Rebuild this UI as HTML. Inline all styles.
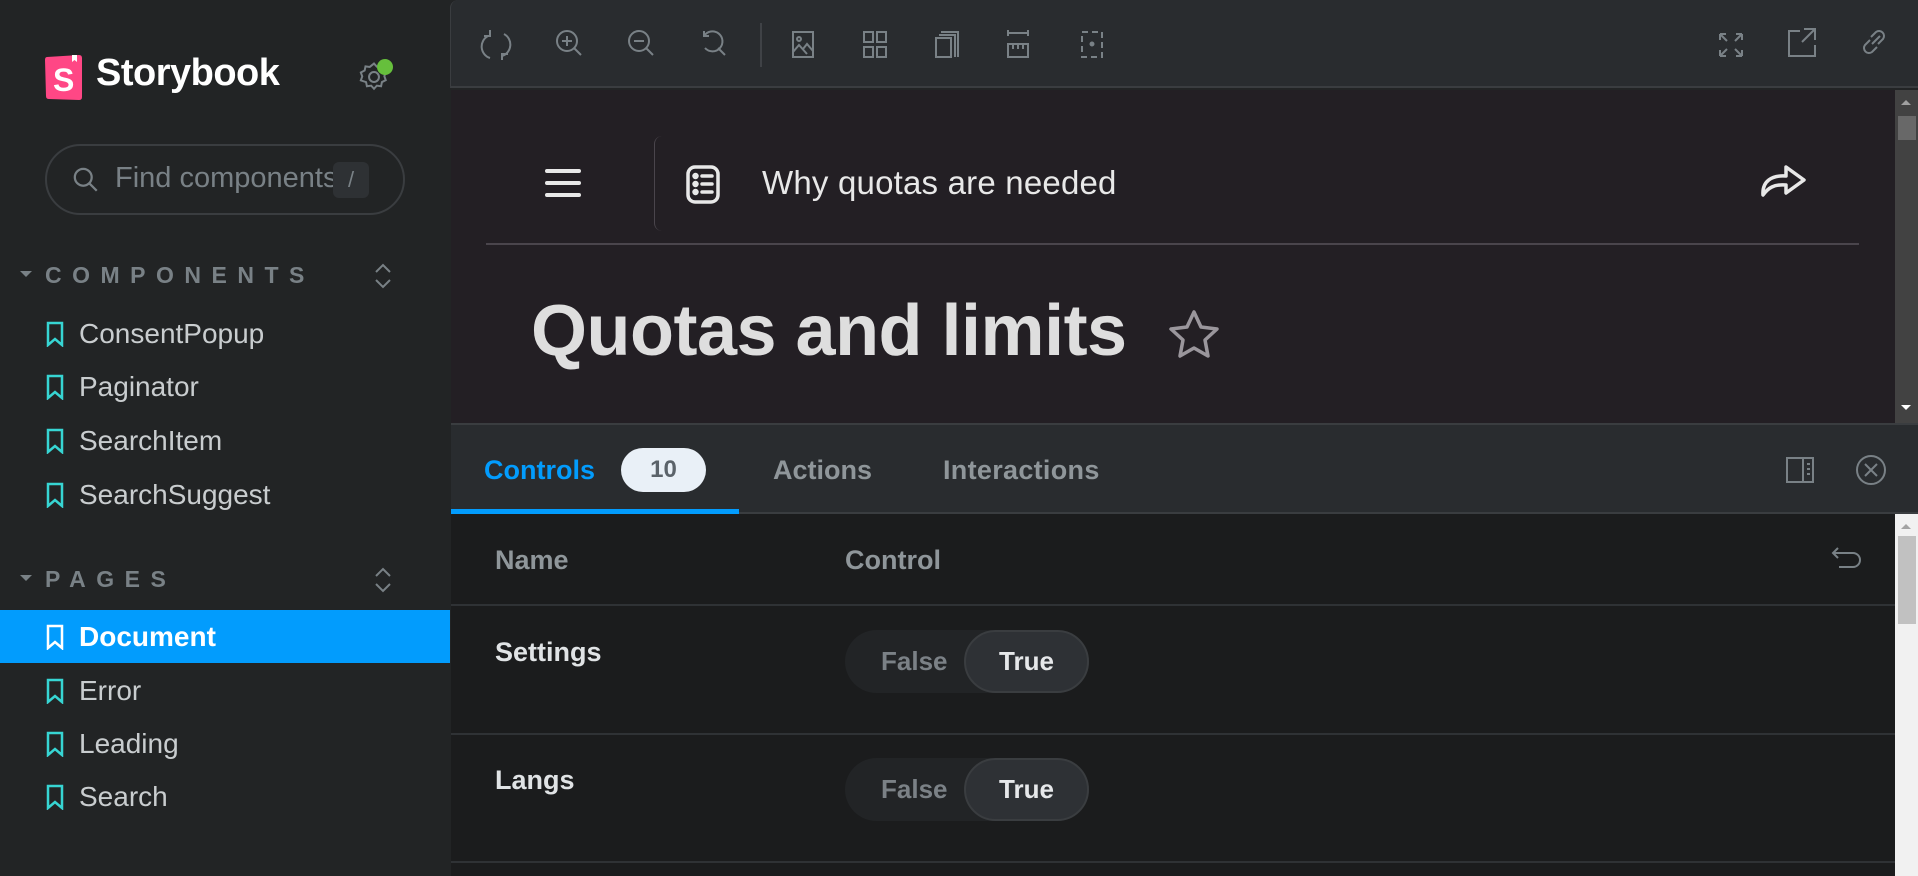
<!DOCTYPE html>
<html><head><meta charset="utf-8"><style>
*{margin:0;padding:0;box-sizing:border-box}
body{width:1918px;height:876px;overflow:hidden;background:#222425;font-family:"Liberation Sans",sans-serif;position:relative}
.a{position:absolute}
.side{left:0;top:0;width:450px;height:876px;background:#222425}
.item{position:absolute;left:0;width:450px;height:53px;color:#c9cdcf;font-size:28px;line-height:53px;padding-left:79px}
.item svg{position:absolute;left:46px;top:14px}
.hdr{position:absolute;left:45px;color:#798186;font-size:23px;font-weight:bold;letter-spacing:10.5px}
</style></head><body>
<div class="a side">
  <svg class="a" style="left:45px;top:53px" width="38" height="47" viewBox="0 0 38 47"><path d="M2 4 L34 2 Q37 2 37 5 L37 44 Q37 47 34 47 L4 46 Q1 46 1 43 L0 7 Q0 4 2 4Z" fill="#ff4785"/><path d="M27 2 L27 9 L29.5 7 L32 9 L32 2Z" fill="#fff"/><text x="8" y="38" font-family="Liberation Sans" font-weight="bold" font-size="32" fill="#fff">S</text></svg>
  <div class="a" style="left:96px;top:52px;color:#fff;font-size:38px;font-weight:bold;letter-spacing:-0.5px">Storybook</div>
  <svg class="a" style="left:356px;top:60px" width="36" height="34" viewBox="0 0 24 24" fill="none" stroke="#798186" stroke-width="1.4"><circle cx="12" cy="12" r="3.5"/><path d="M12 2.5l2 2.2 3-.4.6 2.9 2.7 1.4-1 2.8 1 2.8-2.7 1.4-.6 2.9-3-.4-2 2.2-2-2.2-3 .4-.6-2.9L2.7 14.4l1-2.8-1-2.8 2.7-1.4.6-2.9 3 .4z"/></svg>
  <div class="a" style="left:377px;top:59px;width:16px;height:16px;border-radius:50%;background:#66bf3c"></div>
  <div class="a" style="left:45px;top:144px;width:360px;height:71px;border:2px solid #3a3d40;border-radius:36px"></div>
  <svg class="a" style="left:72px;top:166px" width="27" height="27" viewBox="0 0 24 24" fill="none" stroke="#798186" stroke-width="2"><circle cx="10" cy="10" r="7.5"/><path d="M15.5 15.5L22 22"/></svg>
  <div class="a" style="left:115px;top:162px;color:#798186;font-size:29px;width:218px;overflow:hidden;white-space:nowrap">Find components</div>
  <div class="a" style="left:333px;top:162px;width:36px;height:36px;border-radius:6px;background:#2e3134;color:#798186;font-size:22px;text-align:center;line-height:36px">/</div>
  <svg class="a" style="left:20px;top:271px" width="12" height="8"><path d="M0 0h12L6 6z" fill="#798186"/></svg>
  <div class="hdr" style="top:262px">COMPONENTS</div>
  <svg class="a" style="left:373px;top:262px" width="20" height="28" fill="none" stroke="#798186" stroke-width="2"><path d="M3 10l7-7 7 7M3 18l7 7 7-7"/></svg>
  <div class="item" style="top:307px"><svg width="18" height="26" fill="none" stroke="#37d5d3" stroke-width="2.5"><path d="M2 2h14v22l-7-6-7 6z"/></svg>ConsentPopup</div>
  <div class="item" style="top:360px"><svg width="18" height="26" fill="none" stroke="#37d5d3" stroke-width="2.5"><path d="M2 2h14v22l-7-6-7 6z"/></svg>Paginator</div>
  <div class="item" style="top:414px"><svg width="18" height="26" fill="none" stroke="#37d5d3" stroke-width="2.5"><path d="M2 2h14v22l-7-6-7 6z"/></svg>SearchItem</div>
  <div class="item" style="top:468px"><svg width="18" height="26" fill="none" stroke="#37d5d3" stroke-width="2.5"><path d="M2 2h14v22l-7-6-7 6z"/></svg>SearchSuggest</div>
  <svg class="a" style="left:20px;top:575px" width="12" height="8"><path d="M0 0h12L6 6z" fill="#798186"/></svg>
  <div class="hdr" style="top:566px">PAGES</div>
  <svg class="a" style="left:373px;top:566px" width="20" height="28" fill="none" stroke="#798186" stroke-width="2"><path d="M3 10l7-7 7 7M3 18l7 7 7-7"/></svg>
  <div class="item" style="top:610px;background:#029cfd;color:#fff;font-weight:bold"><svg width="18" height="26" fill="none" stroke="#fff" stroke-width="2.5"><path d="M2 2h14v22l-7-6-7 6z"/></svg>Document</div>
  <div class="item" style="top:664px"><svg width="18" height="26" fill="none" stroke="#37d5d3" stroke-width="2.5"><path d="M2 2h14v22l-7-6-7 6z"/></svg>Error</div>
  <div class="item" style="top:717px"><svg width="18" height="26" fill="none" stroke="#37d5d3" stroke-width="2.5"><path d="M2 2h14v22l-7-6-7 6z"/></svg>Leading</div>
  <div class="item" style="top:770px"><svg width="18" height="26" fill="none" stroke="#37d5d3" stroke-width="2.5"><path d="M2 2h14v22l-7-6-7 6z"/></svg>Search</div>
</div>

<!-- toolbar -->
<div class="a" style="left:450px;top:0;width:1468px;height:88px;background:#292c2f;border-bottom:2px solid #3a3d40;border-left:1px solid #3a3d40;border-top-left-radius:8px"></div>
<svg class="a" style="left:450px;top:0" width="1468" height="88" fill="none" stroke="#798186" stroke-width="2">
  <g transform="translate(32,30)"><path d="M6 6A12 12 0 0 0 8 28M8 0v6H2M22 4a12 12 0 0 1-2 22M20 30v-6h6"/></g>
  <g transform="translate(106,30)"><circle cx="11" cy="11" r="10"/><path d="M18 18l7 7M11 6v10M6 11h10"/></g>
  <g transform="translate(178,30)"><circle cx="11" cy="11" r="10"/><path d="M18 18l7 7M6 11h10"/></g>
  <g transform="translate(250,30)"><path d="M4 6A10 10 0 1 1 5 18M4 1v5h5M18 18l7 7"/></g>
  <path d="M311 23v44" stroke="#3f4246"/>
  <g transform="translate(343,32)"><rect x="0" y="0" width="20" height="25"/><circle cx="6" cy="7" r="2"/><path d="M0 20l6-7 8 9M10 17l4-5 6 7"/></g>
  <g transform="translate(414,32)"><rect x="0" y="0" width="9" height="10"/><rect x="13" y="0" width="9" height="10"/><rect x="0" y="15" width="9" height="10"/><rect x="13" y="15" width="9" height="10"/></g>
  <g transform="translate(486,32)"><rect x="0" y="6" width="15" height="19"/><path d="M3 3h16v22M5 0h17v25"/></g>
  <g transform="translate(558,32)"><path d="M0 1h20M0 -2v6M20 -2v6"/><rect x="0" y="12" width="20" height="13"/><path d="M5 12v5M10 12v5M15 12v5"/></g>
  <g transform="translate(632,32)" stroke-dasharray="6 4"><rect x="0" y="0" width="20" height="25"/></g><circle cx="642" cy="44" r="1.5" fill="#798186"/>
  <g transform="translate(1268,32)"><path d="M2 2l7 7M2 2h6M2 2v6M24 2l-7 7M24 2h-6M24 2v6M2 24l7-7M2 24h6M2 24v-6M24 24l-7-7M24 24h-6M24 24v-6"/></g>
  <g transform="translate(1338,28)"><path d="M12 3H1v25h26V17M16 1h11v11M27 1L14 14"/></g>
  <g transform="translate(1410,28)"><path d="M12 16l8-8M10 12l-5 5a5 5 0 0 0 7 7l5-5M18 16l5-5a5 5 0 0 0-7-7l-5 5"/></g>
</svg>

<!-- preview -->
<div class="a" style="left:451px;top:90px;width:1444px;height:333px;background:#231f24"></div>
<div class="a" style="left:1895px;top:90px;width:23px;height:333px;background:#424242"></div>
<svg class="a" style="left:1895px;top:90px" width="23" height="333"><path d="M6 15l5-5 5 5z" fill="#a0a0a0"/><rect x="3" y="26" width="18" height="24" fill="#686868"/><path d="M6 315l5 5 5-5z" fill="#fff"/></svg>
<svg class="a" style="left:544px;top:168px" width="40" height="32" stroke="#e8e8e8" stroke-width="4" stroke-linecap="round"><path d="M3 3h32M3 15h32M3 27h32"/></svg>
<div class="a" style="left:654px;top:136px;width:10px;height:95px;border-left:1px solid #4a454c;border-radius:8px 0 0 8px"></div>
<svg class="a" style="left:686px;top:165px" width="38" height="40" fill="none" stroke="#e8e8e8" stroke-width="3.5"><rect x="2" y="2" width="30" height="35" rx="7"/><path d="M16 11h10M16 19h10M16 27h10" stroke-linecap="round"/><circle cx="9.5" cy="11" r="1.5" fill="#e8e8e8"/><circle cx="9.5" cy="19" r="1.5" fill="#e8e8e8"/><circle cx="9.5" cy="27" r="1.5" fill="#e8e8e8"/></svg>
<div class="a" style="left:762px;top:164px;color:#e8e8e8;font-size:33px;letter-spacing:0.2px">Why quotas are needed</div>
<svg class="a" style="left:1760px;top:163px" width="48" height="36" fill="none" stroke="#e8e8e8" stroke-width="3.5" stroke-linejoin="round"><path d="M3 32C2 18 12 12 26 13V4l18 13-18 13v-8C14 21 8 25 3 32Z"/></svg>
<div class="a" style="left:486px;top:243px;width:1373px;height:2px;background:#4a454c"></div>
<div class="a" style="left:531px;top:290px;color:#dedede;font-size:72px;font-weight:bold;letter-spacing:-0.5px">Quotas and limits</div>
<svg class="a" style="left:1166px;top:309px" width="56" height="52" fill="none" stroke="#9a969c" stroke-width="3.5" stroke-linejoin="round"><path d="M28 3l7 15 16 2-12 11 3 16-14-8-14 8 3-16L5 20l16-2z"/></svg>

<!-- panel tabs -->
<div class="a" style="left:451px;top:423px;width:1467px;height:91px;background:#292c2f;border-top:2px solid #3a3d40;border-bottom:2px solid #3a3d40"></div>
<div class="a" style="left:484px;top:455px;color:#029cfd;font-size:27px;font-weight:bold">Controls</div>
<div class="a" style="left:621px;top:448px;width:85px;height:44px;border-radius:22px;background:#e9f0f7;color:#5b636a;font-size:24px;font-weight:bold;text-align:center;line-height:44px">10</div>
<div class="a" style="left:773px;top:455px;color:#8f969a;font-size:27px;font-weight:bold">Actions</div>
<div class="a" style="left:943px;top:455px;color:#8f969a;font-size:27px;font-weight:bold;letter-spacing:0.3px">Interactions</div>
<div class="a" style="left:451px;top:509px;width:288px;height:5px;background:#029cfd"></div>
<svg class="a" style="left:1785px;top:455px" width="30" height="30" fill="none" stroke="#798186" stroke-width="2"><rect x="2" y="3" width="26" height="24"/><path d="M18 3v24M22 9h3M22 14h3M22 19h3"/></svg>
<svg class="a" style="left:1855px;top:454px" width="32" height="32" fill="none" stroke="#798186" stroke-width="2"><circle cx="16" cy="16" r="14"/><path d="M10 10l12 12M22 10L10 22"/></svg>

<!-- table -->
<div class="a" style="left:451px;top:514px;width:1444px;height:362px;background:#1b1c1d"></div>
<div class="a" style="left:1895px;top:514px;width:23px;height:362px;background:#f1f1f1"></div>
<svg class="a" style="left:1895px;top:514px" width="23" height="120"><path d="M6 15l5-5 5 5z" fill="#a3a3a3"/><rect x="3" y="22" width="18" height="88" fill="#c1c1c1"/></svg>
<div class="a" style="left:495px;top:545px;color:#8f969a;font-size:27px;font-weight:bold">Name</div>
<div class="a" style="left:845px;top:545px;color:#8f969a;font-size:27px;font-weight:bold">Control</div>
<svg class="a" style="left:1831px;top:545px" width="32" height="24" fill="none" stroke="#798186" stroke-width="2"><path d="M7 3L2 8l5 5M2 8h20a7 7 0 0 1 0 14H8"/></svg>
<div class="a" style="left:451px;top:604px;width:1444px;height:2px;background:#2f3235"></div>
<div class="a" style="left:451px;top:733px;width:1444px;height:2px;background:#2f3235"></div>
<div class="a" style="left:451px;top:861px;width:1444px;height:2px;background:#2f3235"></div>
<div class="a" style="left:495px;top:637px;color:#e0e3e5;font-size:27px;font-weight:bold">Settings</div>
<div class="a" style="left:495px;top:765px;color:#e0e3e5;font-size:27px;font-weight:bold">Langs</div>
<div class="a" style="left:845px;top:630px;width:244px;height:63px;border-radius:32px;background:#222426"></div>
<div class="a" style="left:964px;top:630px;width:125px;height:63px;border-radius:32px;background:#2e3135;border:2px solid #3a3d40"></div>
<div class="a" style="left:881px;top:646px;color:#7b8186;font-size:26px;font-weight:bold">False</div>
<div class="a" style="left:999px;top:646px;color:#e6e8ea;font-size:26px;font-weight:bold">True</div>
<div class="a" style="left:845px;top:758px;width:244px;height:63px;border-radius:32px;background:#222426"></div>
<div class="a" style="left:964px;top:758px;width:125px;height:63px;border-radius:32px;background:#2e3135;border:2px solid #3a3d40"></div>
<div class="a" style="left:881px;top:774px;color:#7b8186;font-size:26px;font-weight:bold">False</div>
<div class="a" style="left:999px;top:774px;color:#e6e8ea;font-size:26px;font-weight:bold">True</div>
</body></html>
